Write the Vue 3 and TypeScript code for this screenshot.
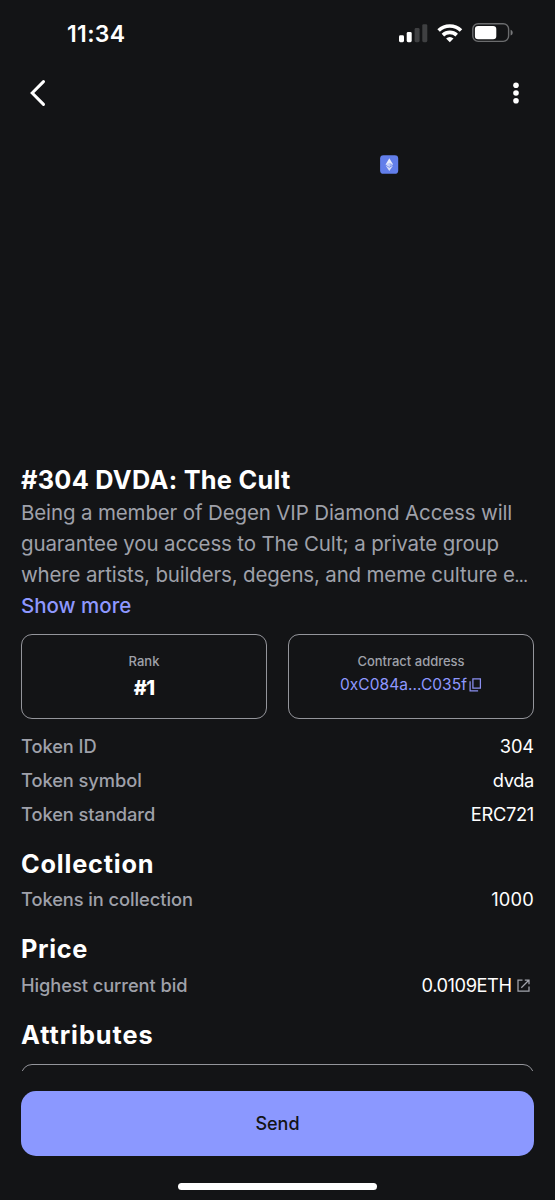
<script setup lang="ts">
interface Detail {
  label: string
  value: string
  kind: string
  link?: boolean
}

const description: string[] = [
  'Being a member of Degen VIP Diamond Access will',
  'guarantee you access to The Cult; a private group',
  'where artists, builders, degens, and meme culture e',
]

const tokenDetails: Detail[] = [
  { label: 'Token ID', value: '304', kind: 'id' },
  { label: 'Token symbol', value: 'dvda', kind: 'symbol' },
  { label: 'Token standard', value: 'ERC721', kind: 'standard' },
]

const sections: { title: string; kind: string; detail: Detail }[] = [
  { title: 'Collection', kind: 'collection', detail: { label: 'Tokens in collection', value: '1000', kind: 'supply' } },
  { title: 'Price', kind: 'price', detail: { label: 'Highest current bid', value: '0.0109ETH', kind: 'bid', link: true } },
]
</script>

<template>
  <div class="screen">
    <header class="status">
      <span class="time">11:34</span>
      <div class="indicators">
        <svg class="signal" width="29" height="19" viewBox="0 0 29 19">
          <rect x="0" y="11.2" width="5" height="7" rx="1.4" fill="#fff" />
          <rect x="7.7" y="8" width="5" height="10.2" rx="1.4" fill="#fff" />
          <rect x="15.6" y="4" width="5" height="14.2" rx="1.4" fill="#3f4042" />
          <rect x="23.3" y="0.2" width="5" height="18" rx="1.4" fill="#3f4042" />
        </svg>
        <svg class="wifi" width="26" height="19" viewBox="0 0 26 19">
          <g fill="none" stroke="#fff" stroke-width="3.6">
            <path d="M1.6 6.5a16.2 16.2 0 0 1 22.4 0" />
            <path d="M5.9 11.1a10 10 0 0 1 13.8 0" />
          </g>
          <path d="M12.8 18.2l-3.7-3.7a5.3 5.3 0 0 1 7.4 0z" fill="#fff" />
        </svg>
        <svg class="battery" width="42" height="20" viewBox="0 0 42 20">
          <rect x="0.8" y="0.8" width="35.8" height="17.6" rx="5.3" fill="none" stroke="#6b6c6e" stroke-width="1.4" />
          <rect x="2.9" y="2.9" width="21.4" height="13.4" rx="3.2" fill="#fff" />
          <path d="M38.6 6.7c2.8.8 2.8 5 0 5.8z" fill="#77787a" />
        </svg>
      </div>
    </header>

    <nav class="toolbar">
      <svg width="18" height="28" viewBox="0 0 18 28">
        <path d="M14.5 2.6L3.2 14l11.3 11.4" fill="none" stroke="#fff" stroke-width="3" stroke-linecap="round" stroke-linejoin="miter" />
      </svg>
      <svg width="8" height="24" viewBox="0 0 8 24">
        <g fill="#fff">
          <circle cx="4" cy="4.2" r="2.8" />
          <circle cx="4" cy="12" r="2.8" />
          <circle cx="4" cy="19.8" r="2.8" />
        </g>
      </svg>
    </nav>

    <div class="media">
      <svg class="chain" width="19" height="19" viewBox="0 0 19 19">
        <rect x="0.1" y="0.2" width="18.1" height="18.6" rx="3.4" fill="#627eea" />
        <path d="M9.3 3.2L5.6 9.6l3.7 2.2 3.8-2.2z" fill="#e9edfc" />
        <path d="M9.3 7.8l3.8 1.8-3.8 2.2z" fill="#9eb0f2" />
        <path d="M9.3 7.8L5.6 9.6l3.7 2.2z" fill="#c5d0f8" />
        <path d="M5.6 10.5l3.7 5.4 3.8-5.4-3.8 2.2z" fill="#d6defa" />
      </svg>
    </div>

    <main class="content">
      <h1 class="heading name">#304 DVDA: The Cult</h1>
      <p class="description">
        <span v-for="(line, i) in description" :key="line" class="line">{{ line }}<span v-if="i === description.length - 1" class="ellipsis">…</span></span>
      </p>
      <span class="more">Show more</span>

      <div class="cards">
        <section class="card">
          <span class="caption">Rank</span>
          <strong class="rank">#1</strong>
        </section>
        <section class="card">
          <span class="caption">Contract address</span>
          <span class="address">
            <span class="hash">0xC084a...C035f</span>
            <svg width="13" height="14" viewBox="0 0 13 14">
              <g fill="none" stroke="#8b8ff0" stroke-width="1.25">
                <path d="M3.9 0.9h7.5v9.2H3.9z" />
                <path d="M1.1 3.2v9.6h8" />
              </g>
            </svg>
          </span>
        </section>
      </div>

      <div class="details">
        <div v-for="row in tokenDetails" :key="row.kind" :class="['row', row.kind]">
          <span class="label">{{ row.label }}</span>
          <span class="value">{{ row.value }}</span>
        </div>
      </div>

      <section v-for="s in sections" :key="s.kind" class="section">
        <h2 :class="['heading', s.kind]">{{ s.title }}</h2>
        <div :class="['row', s.detail.kind]">
          <span class="label">{{ s.detail.label }}</span>
          <span class="value">{{ s.detail.value }}</span>
          <svg v-if="s.detail.link" class="external" width="13" height="13" viewBox="0 0 13 13">
            <g fill="none" stroke="#a3a5ad" stroke-width="1.25">
              <path d="M5.5 1H1v11h11V7.5" />
              <path d="M7.8 1H12v4.2M12 1L4.3 8.7" />
            </g>
          </svg>
        </div>
      </section>
      <h2 class="heading attributes">Attributes</h2>
      <div class="attribute-list"><div class="attribute-card"></div></div>
    </main>

    <footer class="footer">
      <button class="send" type="button"><span>Send</span></button>
      <div class="home-bar"></div>
    </footer>
  </div>
</template>

<style>
body {
  background: #131416;
}
</style>

<style scoped>
.screen {
  display: flex;
  flex-direction: column;
  width: 555px;
  height: 1200px;
  overflow: hidden;
  box-sizing: border-box;
  background: #131416;
  color: #fff;
  font-family: Inter, "Liberation Sans", sans-serif;
  white-space: nowrap;
}
.status {
  display: flex;
  justify-content: space-between;
  align-items: center;
  height: 66px;
  padding: 0 41px 0 67px;
  flex: none;
}
.time {
  padding-top: 1px;
  font-size: 23px;
  font-weight: 600;
  letter-spacing: 0.35px;
}
.indicators {
  display: flex;
  align-items: center;
}
.signal {
  margin-right: 0.5px;
}
.wifi {
  margin-left: 9px;
}
.battery {
  margin-left: 9px;
}
.toolbar {
  display: flex;
  justify-content: space-between;
  align-items: center;
  height: 54px;
  padding: 0 35px 0 29px;
  flex: none;
}
.media {
  display: flex;
  justify-content: flex-end;
  height: 309px;
  padding: 35px 156px 0 0;
  flex: none;
}
.content {
  display: flex;
  flex-direction: column;
  padding: 0 21px;
  flex: none;
}
.heading {
  margin: 0;
  height: 32px;
  font-size: 25.3px;
  line-height: 32px;
  font-weight: 700;
}
.name {
  letter-spacing: 0.28px;
}
.collection {
  letter-spacing: 0.8px;
}
.price {
  letter-spacing: 0.65px;
}
.attributes {
  letter-spacing: 0.95px;
}
.description {
  display: flex;
  flex-direction: column;
  margin: 1px 0 0;
  color: #9fa1aa;
  font-size: 20.5px;
  line-height: 31px;
  letter-spacing: -0.14px;
}
.line {
  align-self: flex-start;
  height: 31px;
}
.line:last-child {
  letter-spacing: -0.17px;
}
.ellipsis {
  font-size: 13px;
  font-weight: 700;
  line-height: 1;
}
.more {
  align-self: flex-start;
  color: #8e98ff;
  font-size: 20.5px;
  font-weight: 500;
  line-height: 31px;
}
.cards {
  display: grid;
  grid-template-columns: 1fr 1fr;
  gap: 21px;
  margin-top: 13px;
}
.card {
  display: flex;
  flex-direction: column;
  align-items: center;
  box-sizing: border-box;
  height: 85px;
  padding-top: 16px;
  border: 1.3px solid #94959b;
  border-radius: 11px;
}
.caption {
  color: #9fa1aa;
  font-size: 13px;
  font-weight: 500;
  line-height: 21px;
}
.rank {
  margin-top: 4px;
  font-size: 20px;
  font-weight: 800;
  line-height: 24px;
  letter-spacing: -0.8px;
}
.address {
  display: flex;
  align-items: center;
  gap: 2px;
  color: #8e98ff;
  font-size: 15.5px;
  line-height: 25px;
}
.hash {
  letter-spacing: 0.06px;
}
.details {
  margin-top: 11.3px;
  margin-bottom: 16.4px;
}
.row {
  display: flex;
  align-items: center;
  height: 33.7px;
  font-size: 18.3px;
  line-height: 33.7px;
}
.label {
  flex: 1;
  color: #9fa1aa;
  font-weight: 500;
  letter-spacing: -0.07px;
}
.id .value {
  letter-spacing: -0.15px;
}
.symbol .value {
  letter-spacing: -0.35px;
}
.standard .value {
  letter-spacing: -0.3px;
}
.supply .value {
  letter-spacing: 0.2px;
}
.bid {
  padding-top: 0.7px;
  margin-bottom: -0.7px;
}
.bid .value {
  letter-spacing: -0.45px;
}
.section {
  display: flex;
  flex-direction: column;
  gap: 3px;
  margin-bottom: 16.8px;
}
.external {
  margin: 0 4px 0 5.4px;
}
.attribute-list {
  height: 7px;
  margin-top: 13.6px;
  overflow: hidden;
}
.attribute-card {
  height: 60px;
  border: 1.3px solid #94959b;
  border-radius: 11px;
}
.footer {
  display: flex;
  flex-direction: column;
  align-items: center;
  margin-top: auto;
  padding: 0 21px 10px;
}
.send {
  display: block;
  width: 100%;
  height: 65px;
  padding: 0;
  border: 0;
  border-radius: 15px;
  background: #8b98ff;
  color: #131416;
  font: 500 18px Inter, "Liberation Sans", sans-serif;
}
.home-bar {
  width: 199px;
  height: 7px;
  margin-top: 27px;
  border-radius: 4px;
  background: #fff;
}
</style>
